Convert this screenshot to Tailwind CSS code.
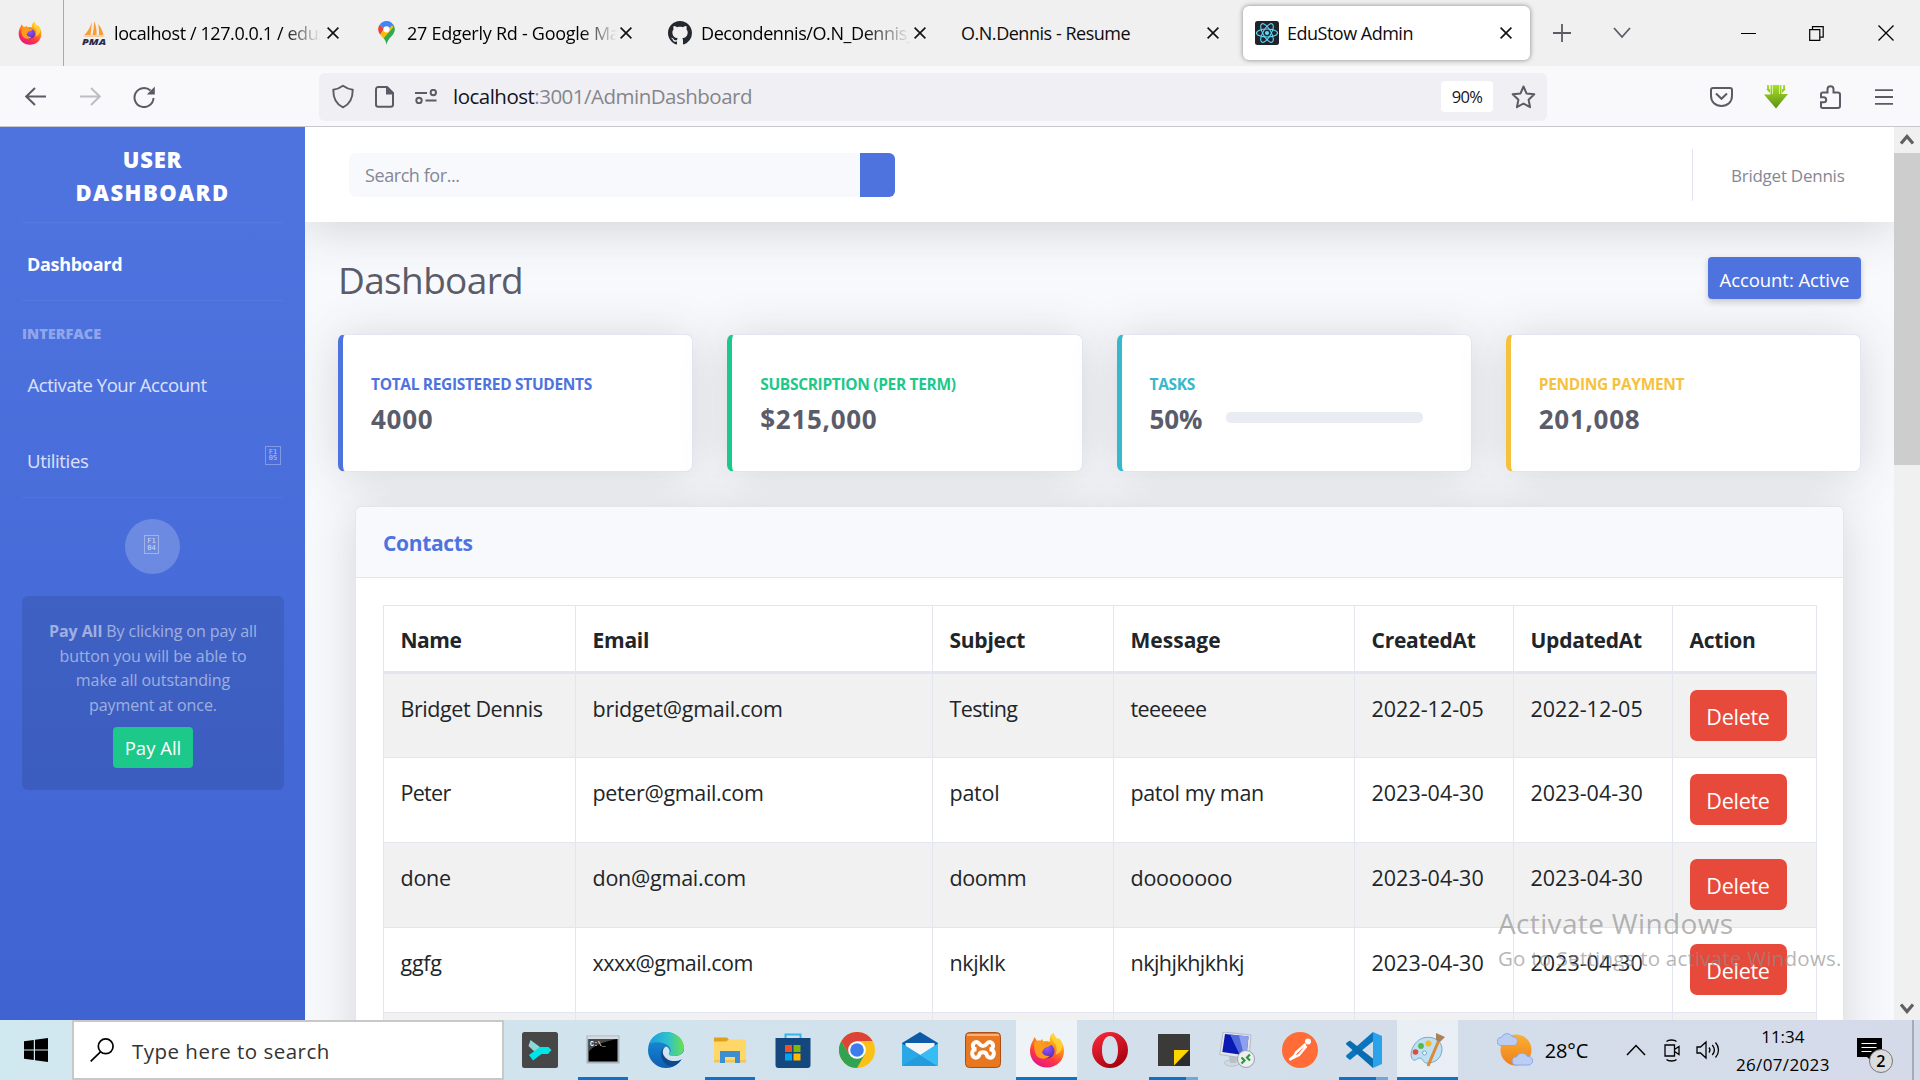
<!DOCTYPE html>
<html lang="en">
<head>
<meta charset="utf-8">
<title>EduStow Admin</title>
<script src="https://cdn.jsdelivr.net/npm/@tailwindcss/browser@4"></script>
</head>
<body class="relative flex h-[1080px] w-[1920px] flex-col overflow-hidden bg-white font-['Open_Sans','Noto_Sans',sans-serif]">

<!-- shared gradients and symbols -->
<svg class="absolute size-0" aria-hidden="true">
  <defs>
    <linearGradient id="ffFlame" x1=".8" y1="0" x2=".3" y2="1"><stop offset="0" stop-color="#fff44f"/><stop offset=".35" stop-color="#ff980e"/><stop offset=".7" stop-color="#ff3647"/><stop offset="1" stop-color="#e31587"/></linearGradient>
    <radialGradient id="ffGlobe" cx=".5" cy=".3" r=".7"><stop offset="0" stop-color="#9059ff"/><stop offset="1" stop-color="#5b2bb5"/></radialGradient>
    <symbol id="firefox" viewBox="0 0 36 36">
      <path fill="url(#ffFlame)" d="M3.500 9.500 5.500 5l2.600 4c1.300-.7 2.200-.6 3.400-.2L13 7l1.200 2.600c2-.8 4.800-.7 7 .1C20 7 21 3 24.500.500c.3 3 2.200 5 4.500 7l1-1.500c3 4 5 8 5 13C35 28.500 27.500 35.500 18 35.500S1 28.500 1 19c0-3.500 1-7 2.500-9.500Z"/>
      <circle cx="18" cy="19" r="7.600" fill="url(#ffGlobe)"/>
      <path fill="#ff9b1c" d="M5.500 10c3-1.500 7-1.300 9.500.5 2.200 1.300 5 .8 7.500 1.500-1.500 2.500-4 3-6 3.500-2 1-1.800 3-3.500 4.500 1 3 4 4.500 7.500 4-3 3.300-8 3.500-11.500 1C5.500 22 4.500 15 5.500 10Z"/>
      <path fill="#ffd33a" d="M24.500.500c-3 5-.5 9 2 12 1.800 3 1.500 7 0 10 5-1 7.500-6 6.500-11-1-3-8-6-8.500-11Z" opacity=".85"/>
    </symbol>
    <symbol id="x" viewBox="0 0 12 12"><path d="M.6.6 11.400 11.400M11.400.6.6 11.400" stroke="#111" stroke-width="1.600" fill="none"/></symbol>
  </defs>
</svg>

<!-- tab strip -->
<header class="flex h-[66px] shrink-0 items-center bg-[#f0f0f0] text-[18px] text-[#0c0c0d]">
  <div class="flex h-full w-16 items-center border-r border-[#aaaaaa] pl-[18px]"><svg class="size-6"><use href="#firefox"/></svg></div>
  <div class="flex w-[297px] items-center pl-[18px]">
    <svg class="h-6 w-[24px]" viewBox="0 0 24 24"><path fill="#f89c33" d="M10 1 8.500 14H2.500C6 10 8.500 6 10 1ZM12 0c2 4 3 9 2.500 14h-4C11.500 9 12 5 12 0ZM16 3c3 3 4.500 7 5.500 11H17c0-4 0-7-1-11Z"/><path fill="#f89c33" d="M1 14.500h22l-2 1.300H3Z" opacity=".6"/><text x="0" y="23.500" font-size="9.500" font-weight="800" font-style="italic" textLength="24" lengthAdjust="spacingAndGlyphs" fill="#2b2a4c">PMA</text></svg>
    <div class="ml-[8px] w-[211px] overflow-hidden pt-px whitespace-nowrap bg-linear-to-r from-black from-80% to-transparent to-98% bg-clip-text tracking-[-0.41px] text-transparent">localhost / 127.0.0.1 / edustow</div>
    <svg class="ml-[2px] size-3"><use href="#x"/></svg>
  </div>
  <div class="flex w-[289px] items-center pl-[17px]">
    <svg class="h-6 w-[17px]" viewBox="0 0 17 24"><path fill="#34a853" d="M8.500 24C8 19 5.500 17 2.500 13.500L14.800 3C17.500 6.500 17.500 10 15 13.500 12 17 9.500 19 8.500 24Z"/><path fill="#fbbc04" d="M2.200 13.500 12 2l3.500 4-10 11.500c-1-1.500-2.300-2.500-3.300-4Z"/><path fill="#ea4335" d="M2 3.200 6 8 2.200 13.500C-.6 10.500-.3 6 2 3.200Z"/><path fill="#4285f4" d="M2 3.200C5-.8 12-1.500 15 3.500L10 8H6Z"/><circle cx="8.500" cy="8.300" r="3.100" fill="#fff"/></svg>
    <div class="ml-[12px] w-[210px] overflow-hidden pt-px whitespace-nowrap bg-linear-to-r from-black from-83% to-transparent to-100% bg-clip-text tracking-[-0.26px] text-transparent">27 Edgerly Rd - Google Maps</div>
    <svg class="ml-[3px] size-3"><use href="#x"/></svg>
  </div>
  <div class="flex w-[293px] items-center pl-[18px]">
    <svg class="size-6" viewBox="0 0 16 16" fill="#24292f"><path d="M8 0C3.580 0 0 3.580 0 8c0 3.540 2.290 6.530 5.470 7.590.4.07.55-.17.55-.38 0-.19-.01-.82-.01-1.490-2.010.37-2.530-.49-2.690-.94-.09-.23-.48-.94-.82-1.130-.28-.15-.68-.52-.01-.53.63-.01 1.080.58 1.230.82.72 1.210 1.870.87 2.330.66.07-.52.28-.87.51-1.070-1.780-.2-3.640-.89-3.640-3.950 0-.87.31-1.590.82-2.150-.08-.2-.36-1.020.08-2.120 0 0 .67-.21 2.200.82.64-.18 1.320-.27 2-.27s1.360.09 2 .27c1.530-1.040 2.200-.82 2.200-.82.44 1.100.16 1.920.08 2.120.51.56.82 1.270.82 2.150 0 3.070-1.870 3.750-3.650 3.950.29.25.54.73.54 1.480 0 1.070-.01 1.930-.01 2.200 0 .21.15.46.55.38A8.010 8.010 0 0 0 16 8c0-4.420-3.580-8-8-8Z"/></svg>
    <div class="ml-[9px] w-[210px] overflow-hidden pt-px whitespace-nowrap bg-linear-to-r from-black from-77% to-transparent to-100% bg-clip-text tracking-[-0.42px] text-transparent">Decondennis/O.N_Dennis_</div>
    <svg class="ml-[3px] size-3"><use href="#x"/></svg>
  </div>
  <div class="flex w-[300px] items-center pl-[18px]">
    <div class="w-[246px] pt-px whitespace-nowrap tracking-[-0.47px]">O.N.Dennis - Resume</div>
    <svg class="size-3"><use href="#x"/></svg>
  </div>
  <div class="flex h-[54px] w-[287px] items-center rounded-[6px] bg-white pl-3 shadow-[0_0_5px_rgba(0,0,0,0.45)]">
    <svg class="size-6" viewBox="0 0 24 24"><rect width="24" height="24" rx="2.500" fill="#20232a"/><g fill="none" stroke="#61dafb" stroke-width="1.100"><ellipse cx="12" cy="12" rx="10.500" ry="4"/><ellipse cx="12" cy="12" rx="10.500" ry="4" transform="rotate(60 12 12)"/><ellipse cx="12" cy="12" rx="10.500" ry="4" transform="rotate(120 12 12)"/></g><circle cx="12" cy="12" r="2" fill="#61dafb"/></svg>
    <div class="ml-[8px] w-[213px] pt-px tracking-[-0.5px]">EduStow Admin</div>
    <svg class="size-3"><use href="#x"/></svg>
  </div>
  <svg class="ml-[23px] size-[18px]" viewBox="0 0 18 18"><path d="M9 0v18M0 9h18" stroke="#5b5b66" stroke-width="1.800"/></svg>
  <svg class="ml-[42px] h-[12px] w-[18px]" viewBox="0 0 18 12"><path d="m1 1 8 9 8-9" stroke="#5b5b66" stroke-width="1.800" fill="none"/></svg>
  <div class="ml-[110px] h-px w-[15px] bg-black"></div>
  <svg class="ml-[53px] size-[15px]" viewBox="0 0 15 15"><path d="M.7 3.700h10.100v10.600H.7zM3.500 3.500V.7h10.700v10.400h-3" fill="none" stroke="#000" stroke-width="1.200"/></svg>
  <svg class="ml-[54px] size-4" viewBox="0 0 16 16"><path d="m.5.5 15 15m0-15-15 15" stroke="#000" stroke-width="1.300"/></svg>
</header>

<!-- navigation toolbar -->
<nav class="flex h-[61px] shrink-0 items-center border-b border-[#c8c8cc] bg-[#f9f9fb] pt-px">
  <svg class="ml-[25px] h-[19px] w-[21px]" viewBox="0 0 21 19"><path d="M21 9.500H1.500M10 1 1.200 9.500 10 18" fill="none" stroke="#5b5b66" stroke-width="2"/></svg>
  <svg class="ml-[34px] h-[19px] w-[21px]" viewBox="0 0 21 19"><path d="M0 9.500h19.500M11 1l8.800 8.500L11 18" fill="none" stroke="#bdbdc3" stroke-width="2"/></svg>
  <svg class="ml-[32px] size-[22px]" viewBox="0 0 22 22"><path d="M20.500 12A9.500 9.500 0 1 1 17.500 4.600" fill="none" stroke="#5b5b66" stroke-width="2"/><path d="M21.800.5v8h-8Z" fill="#5b5b66"/></svg>
  <div class="ml-[164px] flex h-12 w-[1228px] items-center rounded-[6px] bg-[#f0f0f4]">
    <svg class="ml-[13px] h-[25px] w-[22px]" viewBox="0 0 23 25"><path d="M11.500 1.200c3.500 2.500 6.500 3.800 10.200 4.200 0 8.500-2.500 15-10.200 18.400C3.800 20.400 1.300 13.900 1.300 5.400 5 5 8 3.700 11.500 1.200Z" fill="none" stroke="#5b5b66" stroke-width="2" stroke-linejoin="round"/></svg>
    <svg class="ml-[21px] h-[22px] w-[19px]" viewBox="0 0 19 22"><path d="M3.500 1h8.500l6 6v11.500a2.300 2.300 0 0 1-2.300 2.300H3.300A2.300 2.300 0 0 1 1 18.500v-15A2.300 2.300 0 0 1 3.500 1Z" fill="none" stroke="#5b5b66" stroke-width="2"/><path d="M11 1h2l5.500 6v1.500H11Z" fill="#5b5b66"/></svg>
    <svg class="ml-[21px] h-[15px] w-[23px]" viewBox="0 0 23 15" fill="none" stroke="#5b5b66" stroke-width="2"><path d="M0 4h12M10.500 11.500h11"/><circle cx="18.300" cy="3.500" r="2.700"/><circle cx="4" cy="11.500" r="2.700"/></svg>
    <div class="ml-[15px] text-[20.500px] tracking-[-0.51px] text-[#85858b]"><span class="text-[#15141a]">localhost</span>:3001/AdminDashboard</div>
    <div class="ml-auto flex h-[31px] w-[52px] items-center justify-center rounded-[4px] bg-white pt-px text-[16.500px] tracking-[-0.6px] text-[#15141a]">90%</div>
    <svg class="mr-[11px] ml-[18px] h-[24px] w-[25px]" viewBox="0 0 25 24"><path d="m12.500 1.500 3 6.900 7.800.9-5.700 5.400 1.500 7.500-6.600-3.700-6.600 3.700 1.500-7.500L1.700 9.300l7.800-.9Z" fill="none" stroke="#5b5b66" stroke-width="2" stroke-linejoin="round"/></svg>
  </div>
  <svg class="ml-[163px] h-[20px] w-[23px]" viewBox="0 0 23 20"><path d="M3 1h17a2 2 0 0 1 2 2v6c0 6-4.500 10-10.500 10S1 15 1 9V3a2 2 0 0 1 2-2Z" fill="none" stroke="#5b5b66" stroke-width="2"/><path d="m6 6.500 5.500 5.300L17 6.500" fill="none" stroke="#5b5b66" stroke-width="2"/></svg>
  <svg class="ml-[31px] h-[24px] w-[24px]" viewBox="0 0 24 24"><defs><linearGradient id="dl" x2="0" y2="1"><stop stop-color="#a6e02a"/><stop offset="1" stop-color="#5f8f12"/></linearGradient></defs><path fill="url(#dl)" d="M6.500 0h11v9H24L12 23.500 0 9.500h6.500ZM3 0h2v4H3Zm16 0h2v4h-2ZM2 4l4 4V4Zm20 0-4 4V4Z"/><path d="M8.500 0v9M15.500 0v9" stroke="#d6f58c"/></svg>
  <svg class="ml-[32px] h-[24px] w-[21px]" viewBox="0 0 21 24"><path d="M2.500 7.500h5V4.200a3 3 0 0 1 6 0v3.300h4.300A2.200 2.200 0 0 1 20 9.700v11a2.200 2.200 0 0 1-2.200 2.200H2.500A1.500 1.500 0 0 1 1 21.400v-4.200h2.700a2.500 2.500 0 0 0 0-5H1V9a1.500 1.500 0 0 1 1.500-1.500Z" fill="none" stroke="#5b5b66" stroke-width="2"/></svg>
  <svg class="ml-[34px] h-4 w-[18px]" viewBox="0 0 18 16"><path d="M0 1.200h18M0 8h18M0 14.800h18" stroke="#5b5b66" stroke-width="1.800"/></svg>
</nav>

<!-- page viewport -->
<div class="flex h-[893px] shrink-0 overflow-hidden bg-[#f8f9fc]">
  <aside class="z-10 flex w-[305px] shrink-0 flex-col bg-linear-to-b from-[#4e73df] from-10% to-[#3f64d2] text-[18.500px] text-white/80">
    <div class="h-[95px] pt-4 text-center text-[22px] leading-[33px] font-extrabold tracking-[0.800px] text-white">USER<br><span class="tracking-[1.450px]">DASHBOARD</span></div>
    <hr class="mx-[22px] border-white/5">
    <div class="flex h-[77px] items-center pt-[5px] pl-[27px] text-[18px] font-bold tracking-[-0.3px] text-white">Dashboard</div>
    <hr class="mx-[22px] border-white/5">
    <div class="flex h-[65px] items-center pl-[22px] text-[14.500px] font-extrabold text-white/40">INTERFACE</div>
    <div class="flex h-[38px] items-center pl-[27.500px] tracking-[-0.43px]">Activate Your Account</div>
    <div class="flex h-[93px] items-center justify-between pt-[21px] pr-6 pl-[27px]"><span class="tracking-[-0.35px]">Utilities</span>
      <span class="mb-[12px] flex h-[19px] w-4 items-center justify-center border border-white/30 text-center font-['DejaVu_Sans_Mono',monospace] text-[7px] leading-[6.500px] text-white/60">F1<br>05</span></div>
    <hr class="mx-[22px] border-white/5">
    <div class="mt-[21px] flex size-[55px] items-center justify-center self-center rounded-full bg-white/20 pr-[2px] pb-1">
      <span class="flex h-[19px] w-[15px] items-center justify-center border border-white/35 text-center font-['DejaVu_Sans_Mono',monospace] text-[7px] leading-[6.500px] text-white/70">F1<br>04</span></div>
    <div class="mr-[21px] ml-[22px] mt-[22px] flex h-[194px] flex-col items-center rounded-[6px] bg-black/10 pt-[23px] text-center text-[16px] leading-[24.700px] tracking-[-0.08px] text-white/50">
      <p class="whitespace-nowrap"><b>Pay All</b> By clicking on pay all<br>button you will be able to<br>make all outstanding<br>payment at once.</p>
      <button class="mt-[9px] flex h-[41px] w-20 items-center justify-center rounded-[4px] bg-[#1cc88a] pt-[3px] text-[18.500px] tracking-normal text-white">Pay All</button>
    </div>
  </aside>

  <main class="flex w-[1589px] shrink-0 flex-col">
    <div class="relative flex h-[95px] shrink-0 items-center bg-white pl-[44px] shadow-[0_6px_50px_rgba(58,59,69,0.2)]">
      <div class="flex h-11 w-[511px] items-center rounded-l-[7px] bg-[#f8f9fc] pt-[2px] pl-4 text-[18px] tracking-[-0.42px] text-[#858796]">Search for...</div>
      <div class="h-11 w-[35px] rounded-r-[6px] bg-[#4e73df]"></div>
      <div class="ml-auto h-[52px] w-px bg-[#e3e6f0]"></div>
      <div class="w-[201px] pt-[2px] pl-[38px] text-[17px] tracking-[-0.25px] text-[#858796]">Bridget Dennis</div>
    </div>

    <div class="relative flex h-[112px] shrink-0 items-center justify-between pr-[33px] pl-[33px]">
      <h1 class="pt-[3px] text-[37px] tracking-[-0.65px] text-[#5a5c69]">Dashboard</h1>
      <button class="flex h-[42px] w-[153px] items-center justify-center rounded-[4px] bg-[#4e73df] pt-[3px] text-[18.500px] tracking-[-0.08px] text-white shadow-[0_3px_6px_rgba(58,59,69,0.25)]">Account: Active</button>
    </div>

    <div class="grid shrink-0 grid-cols-4 gap-[34px] pr-[33px] pl-[33px] text-[26px] font-bold tracking-[0.700px] text-[#5a5c69] [&>div]:h-[138px] [&>div]:rounded-[7px] [&>div]:border [&>div]:border-l-[5px] [&>div]:border-[#e3e6f0] [&>div]:bg-white [&>div]:pt-[37px] [&>div]:pl-[28px] [&>div]:shadow-[0_3px_48px_rgba(58,59,69,0.18)] [&_h2]:text-[15.500px] [&_h2]:leading-6 [&_h2]:tracking-[-0.33px] [&_p]:mt-[5px] [&_p]:leading-[36px]">
      <div class="border-l-[#4e73df]!"><h2 class="text-[#4e73df]">TOTAL REGISTERED STUDENTS</h2><p>4000</p></div>
      <div class="border-l-[#1cc88a]!"><h2 class="text-[#1cc88a]">SUBSCRIPTION (PER TERM)</h2><p>$215,000</p></div>
      <div class="border-l-[#36b9cc]!"><h2 class="text-[#36b9cc]">TASKS</h2><p class="flex items-center"><span class="w-[76px] tracking-[-0.100px]">50%</span><span class="mb-[4px] h-[11px] w-[197px] rounded-[5px] bg-[#eaecf4]"></span></p></div>
      <div class="border-l-[#f6c23e]!"><h2 class="text-[#f6c23e]">PENDING PAYMENT</h2><p>201,008</p></div>
    </div>

    <section class="mt-[34px] ml-[50px] w-[1489px] shrink-0 rounded-t-[7px] border border-[#e3e6f0] bg-white shadow-[0_3px_48px_rgba(58,59,69,0.18)]">
      <h2 class="flex h-[71px] items-center rounded-t-[6px] border-b border-[#e3e6f0] bg-[#f8f9fc] pt-[3px] pl-[27px] text-[21px] font-bold tracking-[-0.33px] text-[#4e73df]">Contacts</h2>
      <table class="mt-[27px] ml-[27px] w-[1433px] table-fixed border-collapse text-[21.500px] leading-[34px] tracking-[-0.25px] text-[#212529] [&_button]:flex [&_button]:h-[51px] [&_button]:w-[97px] [&_button]:items-center [&_button]:justify-center [&_button]:rounded-[7px] [&_button]:bg-[#e74a3b] [&_button]:pt-[3px] [&_button]:text-white [&_td]:border [&_td]:border-[#e3e6f0] [&_td]:pl-[16.500px] [&_td]:pt-[17.500px] [&_td:last-child]:pt-4 [&_td]:align-top [&_td]:whitespace-nowrap [&_th]:border [&_th]:border-b-[3px] [&_th]:border-[#e3e6f0] [&_th]:pl-[16.500px] [&_th]:pt-[2px] [&_th]:text-left [&_th]:text-[21px] [&_tbody_tr]:h-[85px] [&_tbody_tr:nth-child(odd)]:bg-[#f1f1f1]">
        <colgroup><col class="w-[192px]"><col class="w-[357px]"><col class="w-[181px]"><col class="w-[241px]"><col class="w-[159px]"><col class="w-[159px]"><col class="w-[144px]"></colgroup>
        <thead><tr class="h-[67px]"><th><span class="tracking-[-0.5px]">Name</span></th><th>Email</th><th>Subject</th><th><span class="tracking-[0.02px]">Message</span></th><th>CreatedAt</th><th>UpdatedAt</th><th>Action</th></tr></thead>
        <tbody>
          <tr><td><span class="tracking-[-0.42px]">Bridget Dennis</span></td><td>bridget@gmail.com</td><td><span class="tracking-[-0.6px]">Testing</span></td><td><span class="tracking-[-0.6px]">teeeeee</span></td><td class="tracking-normal">2022-12-05</td><td class="tracking-normal">2022-12-05</td><td><button>Delete</button></td></tr>
          <tr><td><span class="tracking-[-0.7px]">Peter</span></td><td><span class="tracking-[-0.35px]">peter@gmail.com</span></td><td>patol</td><td><span class="tracking-[-0.4px]">patol my man</span></td><td class="tracking-normal">2023-04-30</td><td class="tracking-normal">2023-04-30</td><td><button>Delete</button></td></tr>
          <tr><td>done</td><td>don@gmai.com</td><td><span class="tracking-[-0.45px]">doomm</span></td><td>dooooooo</td><td class="tracking-normal">2023-04-30</td><td class="tracking-normal">2023-04-30</td><td><button>Delete</button></td></tr>
          <tr><td>ggfg</td><td><span class="tracking-[-0.5px]">xxxx@gmail.com</span></td><td><span class="tracking-[-0.4px]">nkjklk</span></td><td><span class="tracking-[-0.52px]">nkjhjkhjkhkj</span></td><td class="tracking-normal">2023-04-30</td><td class="tracking-normal">2023-04-30</td><td><button>Delete</button></td></tr>
          <tr><td></td><td></td><td></td><td></td><td></td><td></td><td></td></tr>
        </tbody>
      </table>
    </section>
  </main>

  <div class="z-10 flex w-[26px] shrink-0 flex-col items-center bg-[#f0f0f0]">
    <svg class="mt-[7px] h-[11px] w-[14px]" viewBox="0 0 14 11"><path d="m1 9.500 6-7 6 7" fill="none" stroke="#606060" stroke-width="3.200"/></svg>
    <div class="mt-[8px] h-[312px] w-full bg-[#cdcdcd]"></div>
    <svg class="mt-auto mb-[6px] h-[11px] w-[14px]" viewBox="0 0 14 11"><path d="m1 1.500 6 7 6-7" fill="none" stroke="#606060" stroke-width="3.200"/></svg>
  </div>
</div>

<!-- activation watermark -->
<div class="pointer-events-none absolute top-[903px] left-[1498px] z-20 whitespace-nowrap text-[#8c8c8c]/65">
  <div class="text-[28px] leading-[40px] tracking-[0.35px]">Activate Windows</div>
  <div class="text-[20.500px] leading-[30px] tracking-[0.22px]">Go to Settings to activate Windows.</div>
</div>

<!-- taskbar -->
<footer class="flex h-[60px] shrink-0 items-stretch bg-linear-to-r from-[#d0e8f0] via-[#d2e1ec] to-[#d5dae9]">
  <div class="flex w-[72px] items-center pl-6"><svg class="size-6" viewBox="0 0 24 24"><path d="M0 3.300 9.800 2v9.400H0ZM11 1.800 24 0v11.400H11ZM0 12.600h9.800V22L0 20.700ZM11 12.600h13V24l-13-1.800Z"/></svg></div>
  <div class="flex w-[432px] items-center border-2 border-[#c8c8c8] bg-white pl-4">
    <svg class="h-6 w-6" viewBox="0 0 24 24"><circle cx="15.700" cy="8.300" r="7.400" fill="none" stroke="#000" stroke-width="1.700"/><path d="M10.500 13.800.7 23.400" stroke="#000" stroke-width="1.700"/></svg>
    <span class="ml-[18px] pt-[2px] text-[20.500px] tracking-[0.48px] text-[#333]">Type here to search</span>
  </div>
  <div class="ml-[4px] flex [&>div]:relative [&>div]:flex [&>div]:w-[63.400px] [&>div]:items-center [&>div]:justify-center [&_i]:absolute [&_i]:bottom-0 [&_i]:h-[3px] [&_i]:bg-[#0a74c9] [&_svg]:size-9">
    <div><svg viewBox="0 0 36 36"><rect width="36" height="36" rx="2.500" fill="#474747"/><path fill="#8fd6d6" d="M8.500 8 18 15l-4 6-7.500-7Z"/><path fill="#00e5e5" d="m7 23 11-8h8.500l3 3-3.500 4h-6.500L11 28.500Z"/></svg></div>
    <div><svg viewBox="0 0 36 36"><path fill="#a9b1b8" d="M1.500 3.500h33v28h-33z"/><path fill="#d5dbe0" d="M2.500 4.300h31V7h-31z"/><path fill="#000" d="M3.500 7h29v22.500h-29z"/><path fill="#666" d="M3.500 7h29C22 9 9 12 3.500 20Z" opacity=".7"/><text x="5" y="13.500" font-size="6.500" font-weight="700" fill="#fff" font-family="Liberation Mono">C:\_</text></svg><i class="w-[50px]"></i></div>
    <div><svg viewBox="0 0 36 36"><defs><linearGradient id="e1" x2="1"><stop stop-color="#1b9de2"/><stop offset=".55" stop-color="#2fc3c9"/><stop offset="1" stop-color="#6be04b"/></linearGradient><linearGradient id="e2" x2="0" y2="1"><stop stop-color="#1b93dc"/><stop offset="1" stop-color="#0c5fb3"/></linearGradient></defs><circle cx="18" cy="18" r="18" fill="url(#e2)"/><path fill="url(#e1)" d="M1 12C4 4 11 0 18 0c10 0 18 7 18 15.500 0 5-4 8.500-9.500 8.500-4 0-6-1-5.500-2.500C23 20 23 18 22 16c-2.500-5-13-8-21-4Z"/><path fill="#114a8b" d="M13.500 19c-2 7 3 14.500 10 15.500 5-1 8-4 10-7-6 3-13 1-15.500-4-1.500-3-.5-6 1-8-3 0-5 1.500-5.500 3.500Z"/><path fill="#d2e4ed" d="M18 14.500c-3 1.800-4 5-2.500 8.500 2.500 5.500 11 8 17.500 4.500 1-.5 1.500 0 3-4V18c-1 4-5 6-9.500 6-4.500 0-6-1-5.500-2.500 1.500-2 .5-6-3-7Z"/></svg></div>
    <div><svg viewBox="0 0 36 36"><path fill="#dca318" d="M2 5.500h13l2.500 3v5H2z"/><path fill="#ffd768" d="M2 9.500h12l3-2h17V30H2z"/><path fill="#f5c64c" d="M2 28h32v2.500H2z"/><path fill="#3d8fd1" d="M8 19h20v12h-5v-6H13v6H8z"/></svg><i class="w-[50px]"></i></div>
    <div><svg viewBox="0 0 36 36"><path d="M10.500 7V2.500h15V7" fill="none" stroke="#35b5ea" stroke-width="2"/><path fill="#14477e" d="M.5 6h35v27a3 3 0 0 1-3 3h-29a3 3 0 0 1-3-3z"/><path fill="#f25022" d="M10 13h7v7h-7z"/><path fill="#7fba00" d="M18.500 13h7v7h-7z"/><path fill="#00a4ef" d="M10 21.500h7v7h-7z"/><path fill="#ffb900" d="M18.500 21.500h7v7h-7z"/></svg></div>
    <div><svg viewBox="0 0 36 36"><circle cx="18" cy="18" r="18" fill="#fbc116"/><path fill="#32a350" d="M2.400 9A18 18 0 0 0 18 36l7.800-13.500H10.200Z"/><path fill="#dc4437" d="M2.400 9A18 18 0 0 1 33.600 9H18l-7.800 13.500Z"/><circle cx="18" cy="18" r="8.800" fill="#fff"/><circle cx="18" cy="18" r="6.800" fill="#3c7cec"/></svg></div>
    <div><svg viewBox="0 0 36 36"><path fill="#0d5aa7" d="M0 11 18 0l18 11v8H0Z"/><path fill="#f5f5f5" d="M3.500 11h29v12h-29z"/><path fill="#29a7e6" d="M0 11.500 36 34H0Z"/><path fill="#37bdf3" d="M36 11.500V34L18 23Z"/><path fill="#1684d0" d="M18 23 36 34H0Z" opacity=".3"/></svg></div>
    <div><svg viewBox="0 0 36 36"><rect x=".5" y=".5" width="35" height="35" rx="4" fill="#e87722" stroke="#a94f14"/><path d="M2 3h32" stroke="#f6b07a" stroke-width="2"/><path d="M11.500 10c3 0 3 4 6.500 4s3.500-4 6.500-4a3.600 3.600 0 0 1 0 7.300c3.500 0 4.800 2.700 4.300 4.900-1 4.600-6.300 4.600-7.300 0-1-2.700-6-2.700-7 0-1 4.600-6.300 4.600-7.300 0-.5-2.200.8-4.900 4.300-4.900a3.600 3.600 0 0 1 0-7.300Z" fill="none" stroke="#fff" stroke-width="4"/></svg></div>
    <div><span class="absolute inset-y-0 w-[61px] bg-white/60"></span><svg class="relative"><use href="#firefox"/></svg><i class="w-[61px]"></i></div>
    <div><svg viewBox="0 0 36 36"><defs><linearGradient id="op" x2=".6" y2="1"><stop stop-color="#ff2a3c"/><stop offset="1" stop-color="#a7020f"/></linearGradient></defs><path fill="url(#op)" fill-rule="evenodd" d="M18 0a18 18 0 1 0 0 36 18 18 0 0 0 0-36Zm0 4c5 0 8 6 8 14s-3 14-8 14-8-6-8-14 3-14 8-14Z"/></svg></div>
    <div><svg viewBox="0 0 36 36"><path fill="#3b3a39" d="M2 2h32v32H2z"/><path fill="#ffd500" d="M18 18h15L18 33.500z"/><path fill="#2c2c2c" d="M34 18v16H18z"/></svg><i class="left-[7px] w-[37px]"></i><i class="left-[44px] w-3 opacity-50"></i></div>
    <div><svg viewBox="0 0 36 36"><ellipse cx="13" cy="31" rx="7.500" ry="3.300" fill="#d3d8de" stroke="#aab1b8" stroke-width=".6"/><path fill="#b9c0c8" d="m10 24 8 1-1 6h-6Z"/><path fill="#e2e6ea" stroke="#9aa3ac" stroke-width=".6" d="m4 0 28 3-2 24L.8 22.500Z"/><path fill="#0a18b4" d="m6 2 23.500 2.600-2 19L3.300 20Z"/><path fill="#6f8cf0" d="m11 2.600 18.500 2-2 19-7-1Z" opacity=".7"/><path fill="#c9d6fb" d="m20 3.600 9.500 1-2 19-2.500-.4Z" opacity=".5"/><circle cx="27" cy="27" r="8.500" fill="#eceff1" stroke="#9aa0a6"/><path d="m22.500 25.500 3 3-3 3M31 22.500l-3 3 3 3" fill="none" stroke="#2d9a38" stroke-width="2.200"/></svg></div>
    <div><svg viewBox="0 0 36 36"><circle cx="18" cy="18" r="18" fill="#ff6c37"/><circle cx="26" cy="9.500" r="3" fill="#fff"/><path d="M23.500 12 14 20.500l-1.500 3L7.500 28M24.500 14 17 23l-9 4.500" fill="none" stroke="#fff" stroke-width="2.400"/></svg></div>
    <div><svg viewBox="0 0 36 36"><path fill="#0b76bd" d="m27 0 .5 9L4 28l-3.800-3v-1.500Z"/><path fill="#0a6cb0" d="m.2 11 3.800-2.500L27.500 27l-.5 9L.2 12.500Z"/><path fill="#2aa3ea" d="m27 0 9 4v28l-9 4Z"/></svg><i class="left-[7px] w-[37px]"></i><i class="left-[44px] w-3 opacity-50"></i></div>
    <div><span class="absolute inset-y-0 w-[61px] bg-white/50"></span><svg class="relative" viewBox="0 0 36 36"><path fill="#bfe0f3" stroke="#7ba7c7" d="M16 5.500C26 4 33.500 10 33 18c-1 9-7 13-15 13-4.500 0-4-5-7-5s-4 3-6.500 2C-1 25 3 8 16 5.500Z"/><circle cx="6.500" cy="20" r="2.800" fill="#de4b3f"/><circle cx="12" cy="14" r="2.900" fill="#54b948"/><circle cx="19.500" cy="11.500" r="3" fill="#f5b921"/><circle cx="15.500" cy="21" r="2" fill="#eef6fb" stroke="#7ba7c7"/><path d="M30 8 19 34" stroke="#d98a3a" stroke-width="3"/><path fill="#a9815a" d="m27 1 9 4-5 5-4-2Z"/></svg><i class="w-[61px]"></i></div>
  </div>
  <div class="ml-[38px] flex items-center">
    <svg class="h-9 w-[37px]" viewBox="0 0 37 36"><defs><linearGradient id="sun" x2="0" y2="1"><stop stop-color="#fbb034"/><stop offset="1" stop-color="#ee7f1b"/></linearGradient></defs><circle cx="19" cy="18" r="15.500" fill="url(#sun)"/><path d="M4 13.500a4 4 0 0 1 .5-8A6 6 0 0 1 15.500 5 4.300 4.300 0 0 1 17 13.500ZM19 33a4 4 0 0 1 .5-8 6 6 0 0 1 11-.5A4.300 4.300 0 0 1 32 33Z" fill="#bccdf3" stroke="#8ea9e2"/></svg>
    <span class="ml-[11px] w-[81px] pt-[2px] text-[20px] tracking-[-0.2px] text-black">28°C</span>
    <svg class="h-[12px] w-[20px]" viewBox="0 0 20 12"><path d="m1 11 9-9.500L19 11" fill="none" stroke="#000" stroke-width="1.500"/></svg>
    <svg class="ml-[18px] h-[23px] w-[17px]" viewBox="0 0 17 23" fill="none" stroke="#000" stroke-width="1.300"><path d="M1 6h9.500v11H1ZM10.500 10.500l4.500-3v8l-4.500-3M2.500 2.500c2-2 8-2 10 0M2.500 20.500c2 2 8 2 10 0"/></svg>
    <svg class="ml-[15px] h-[20px] w-[24px]" viewBox="0 0 24 20" fill="none" stroke="#000" stroke-width="1.300"><path d="M1 7h3.500L10 2v16l-5.500-5H1ZM13 7.500c1.200 1.500 1.200 3.500 0 5M16.300 5c2.500 3 2.500 7 0 10M19.500 2.500c4 4.500 4 10.500 0 15"/></svg>
    <div class="ml-[9px] w-[108px] pt-px text-center text-[17px] leading-[28px] text-black"><div>11:34</div><div class="tracking-[0.35px]">26/07/2023</div></div>
    <div class="relative ml-[20px]">
      <svg class="h-[24px] w-[25px]" viewBox="0 0 25 24"><path d="M0 0h25v19h-9.500v5L10 19H0Z"/><path d="M4.500 5.500h15M4.500 9.500h15M4.500 13.500h10" stroke="#fff" stroke-width="1.200"/></svg>
      <span class="absolute top-[11px] left-[12px] flex size-6 items-center justify-center rounded-full border border-[#777] bg-[#dcdcdc] text-[16px] font-semibold text-black">2</span>
    </div>
  </div>
  <div class="ml-auto w-[8px] border-l-2 border-[#a4acb8]"></div>
</footer>
</body>
</html>
